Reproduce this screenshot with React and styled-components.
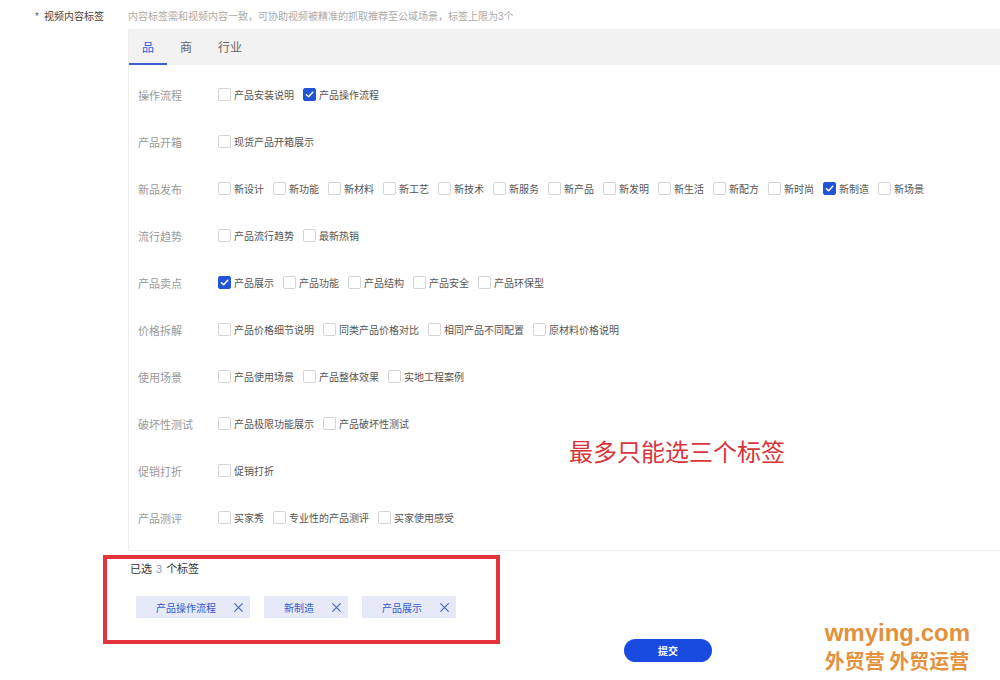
import React, { useState } from 'react'
import styled, { createGlobalStyle } from 'styled-components'

const GlobalStyle = createGlobalStyle`
    html, body {
        margin: 0;
        padding: 0;
        background: #ffffff;
    }
    body {
        font-family: 'Liberation Sans', 'Noto Sans CJK SC', sans-serif;
        color: #333;
    }
`

const Page = styled.div`
    position: relative;
    width: 1000px;
    height: 680px;
    overflow: hidden;
    padding-top: 10px;
    box-sizing: border-box;
`

const FormRow = styled.div`
    display: grid;
    grid-template-columns: 128px 1fr;
`

const FieldLabel = styled.div`
    padding-left: 35px;
    font-size: 10px;
    line-height: 14px;
    color: #444;

    span {
        color: #666;
        margin-right: 5px;
    }
`

const FieldBody = styled.div`
    display: flex;
    flex-direction: column;
`

const Hint = styled.div`
    font-size: 10px;
    line-height: 14px;
    color: #aaa;
    margin-bottom: 5px;
    white-space: nowrap;
`

const Panel = styled.div`
    position: relative;
    border-left: 1px solid #ececec;
    border-bottom: 1px solid #f0f0f0;
    padding-bottom: 9px;
`

const TabBar = styled.div`
    display: flex;
    height: 36px;
    background: #f2f2f2;
`

const Tab = styled.div`
    display: flex;
    align-items: center;
    padding: 0 13px;
    font-size: 12px;
    color: ${props => props.active ? '#2b5ad6' : '#666'};
    border-bottom: 2px solid ${props => props.active ? '#3a62cc' : 'transparent'};
    cursor: pointer;
`

const Rows = styled.div`
    padding: 6px 0 0 9px;
`

const Row = styled.div`
    display: flex;
    align-items: center;
    height: 47px;
`

const RowLabel = styled.div`
    width: 80px;
    flex-shrink: 0;
    font-size: 11px;
    color: #999;
`

const Options = styled.div`
    display: flex;
    align-items: center;
`

const Option = styled.label`
    display: flex;
    align-items: center;
    margin-right: 9px;
    font-size: 10px;
    color: #555;
    cursor: pointer;
    white-space: nowrap;
`

const Box = styled.span`
    width: 13px;
    height: 13px;
    box-sizing: border-box;
    border: 1px solid ${props => props.checked ? '#2155d8' : '#d4d4d4'};
    background: ${props => props.checked ? '#2155d8' : '#fff'};
    border-radius: 2px;
    margin-right: 3px;
    display: flex;
    align-items: center;
    justify-content: center;
`

const Annotation = styled.div`
    position: absolute;
    left: 440px;
    top: 407px;
    font-size: 24px;
    line-height: 30px;
    color: #d8343c;
    font-family: 'Noto Sans CJK SC', sans-serif;
    white-space: nowrap;
`

const Selected = styled.div`
    position: relative;
    padding: 11px 0 0 130px;
`

const SelectedTitle = styled.div`
    font-size: 11px;
    line-height: 14px;
    color: #333;

    b {
        font-weight: normal;
        color: #7f9fd0;
        margin: 0 4px;
    }
`

const TagList = styled.div`
    display: flex;
    gap: 14px;
    margin: 20px 0 0 6px;
`

const Tag = styled.div`
    display: flex;
    align-items: center;
    height: 22px;
    padding: 0 6px 0 20px;
    background: #e6eaf8;
    font-size: 10px;
    color: #3557c8;
    gap: 17px;
`

const CloseIcon = styled.svg`
    width: 11px;
    height: 11px;
    cursor: pointer;
`

const RedFrame = styled.div`
    position: absolute;
    left: 103px;
    top: 4px;
    width: 397px;
    height: 89px;
    box-sizing: border-box;
    border: 4px solid #e3333b;
    pointer-events: none;
`

const Footer = styled.div`
    display: flex;
    padding: 21px 0 0 624px;
`

const SubmitButton = styled.button`
    width: 88px;
    height: 23px;
    border: none;
    border-radius: 12px;
    background: #1a4be0;
    color: #fff;
    font-size: 10px;
    font-family: 'Noto Sans CJK SC', sans-serif;
    font-weight: bold;
    cursor: pointer;
`

const Watermark = styled.div`
    position: absolute;
    right: 30px;
    bottom: 5px;
    display: flex;
    flex-direction: column;
    align-items: flex-start;
    color: #e3913d;
    font-weight: bold;
`

const WatermarkSite = styled.div`
    font-family: 'Liberation Sans', sans-serif;
    font-size: 24px;
    line-height: 28px;
`

const WatermarkName = styled.div`
    font-family: 'Noto Sans CJK SC', sans-serif;
    font-size: 20px;
    line-height: 28px;
`

const groups = [
    ['操作流程', ['产品安装说明', '产品操作流程']],
    ['产品开箱', ['现货产品开箱展示']],
    ['新品发布', ['新设计', '新功能', '新材料', '新工艺', '新技术', '新服务', '新产品', '新发明', '新生活', '新配方', '新时尚', '新制造', '新场景']],
    ['流行趋势', ['产品流行趋势', '最新热销']],
    ['产品卖点', ['产品展示', '产品功能', '产品结构', '产品安全', '产品环保型']],
    ['价格拆解', ['产品价格细节说明', '同类产品价格对比', '相同产品不同配置', '原材料价格说明']],
    ['使用场景', ['产品使用场景', '产品整体效果', '实地工程案例']],
    ['破坏性测试', ['产品极限功能展示', '产品破坏性测试']],
    ['促销打折', ['促销打折']],
    ['产品测评', ['买家秀', '专业性的产品测评', '买家使用感受']],
]

function Check() {
    return (
        <svg width="9" height="9" viewBox="0 0 10 10">
            <path d="M1.5 5.2 L4 7.6 L8.6 2.4" fill="none" stroke="#fff" strokeWidth="1.6" strokeLinecap="round" strokeLinejoin="round" />
        </svg>
    )
}

export default function App() {
    const [tab, setTab] = useState('品')
    const [selected, setSelected] = useState(['产品操作流程', '新制造', '产品展示'])

    const toggle = (name) => {
        if (selected.includes(name)) {
            setSelected(selected.filter(s => s !== name))
        } else if (selected.length < 3) {
            setSelected([...selected, name])
        }
    }

    return (
        <Page>
            <GlobalStyle />
            <FormRow>
                <FieldLabel><span>*</span>视频内容标签</FieldLabel>
                <FieldBody>
                    <Hint>内容标签需和视频内容一致，可协助视频被精准的抓取推荐至公域场景，标签上限为3个</Hint>
                    <Panel>
                        <TabBar>
                            {['品', '商', '行业'].map(t => (
                                <Tab key={t} active={tab === t} onClick={() => setTab(t)}>{t}</Tab>
                            ))}
                        </TabBar>
                        <Rows>
                            {groups.map(([label, options]) => (
                                <Row key={label}>
                                    <RowLabel>{label}</RowLabel>
                                    <Options>
                                        {options.map(o => {
                                            const on = selected.includes(o)
                                            return (
                                                <Option key={o} onClick={() => toggle(o)}>
                                                    <Box checked={on}>{on && <Check />}</Box>
                                                    {o}
                                                </Option>
                                            )
                                        })}
                                    </Options>
                                </Row>
                            ))}
                        </Rows>
                        <Annotation>最多只能选三个标签</Annotation>
                    </Panel>
                </FieldBody>
            </FormRow>

            <Selected>
                <SelectedTitle>已选<b>{selected.length}</b>个标签</SelectedTitle>
                <TagList>
                    {selected.map(s => (
                        <Tag key={s}>
                            {s}
                            <CloseIcon viewBox="0 0 12 12" onClick={() => toggle(s)}>
                                <path d="M1.5 1.5 L10.5 10.5 M10.5 1.5 L1.5 10.5" stroke="#4a66c4" strokeWidth="1.3" fill="none" />
                            </CloseIcon>
                        </Tag>
                    ))}
                </TagList>
                <RedFrame />
            </Selected>

            <Footer>
                <SubmitButton>提交</SubmitButton>
            </Footer>

            <Watermark>
                <WatermarkSite>wmying.com</WatermarkSite>
                <WatermarkName>外贸营 外贸运营</WatermarkName>
            </Watermark>
        </Page>
    )
}
